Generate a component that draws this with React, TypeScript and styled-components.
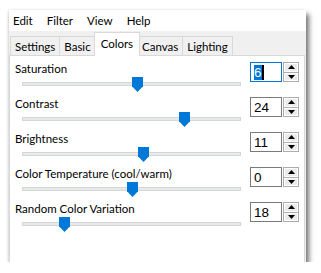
import styled, { createGlobalStyle } from 'styled-components';

const GlobalStyle = createGlobalStyle`
  html, body {
    margin: 0;
    background: #fff;
  }
  body {
    font-family: Lato, "Liberation Sans", sans-serif;
    color: #000;
  }
`;

const Page = styled.div`
  padding: 10px 0 0 9px;
`;

const Window = styled.div`
  width: 297px;
  height: 252px;
  display: flex;
  flex-direction: column;
  background: #f0f0f0;
  box-shadow: 3px 4px 5px rgba(0, 0, 0, 0.55), -1px 0 2px rgba(0, 0, 0, 0.12);
`;

const MenuBar = styled.div`
  height: 21px;
  display: flex;
  align-items: center;
  gap: 14px;
  padding-left: 4px;
  background: #fff;
  font-size: 11.5px;
`;

const MenuItem = styled.span``;

const TabStrip = styled.div`
  height: 24px;
  display: flex;
  align-items: flex-end;
  padding-left: 1px;
`;

const Tab = styled.div<{ $active?: boolean }>`
  height: ${p => (p.$active ? '21px' : '18px')};
  display: flex;
  align-items: center;
  justify-content: center;
  padding: 0 ${p => (p.$active ? '6px' : '4px')} ${p => (p.$active ? '2px' : '0')};
  margin-right: ${p => (p.$active ? '-2px' : '0')};
  margin-bottom: ${p => (p.$active ? '-1px' : '0')};
  margin-left: ${p => (p.$active ? '-2px' : '-1px')};
  border: 1px solid #d9d9d9;
  border-bottom: none;
  background: ${p => (p.$active ? '#fff' : '#f0f0f0')};
  font-size: 11.5px;
  position: relative;
  z-index: ${p => (p.$active ? 1 : 0)};
  &:first-child {
    margin-left: 0;
  }
`;

const Panel = styled.div`
  flex: 1;
  background: #fff;
  border: 1px solid #d9d9d9;
  border-bottom: none;
  margin-right: 1px;
  padding: 5px 0 0 0;
`;

const Row = styled.div`
  height: 35px;
  display: flex;
`;

const Left = styled.div`
  width: 240px;
  display: flex;
  flex-direction: column;
`;

const Label = styled.div`
  font-size: 11.5px;
  line-height: 16px;
  margin-left: 5px;
  white-space: nowrap;
`;

const Slider = styled.div`
  position: relative;
  width: 219px;
  height: 14px;
  margin-left: 12px;
  display: flex;
  align-items: center;
`;

const Track = styled.div`
  width: 100%;
  height: 2px;
  background: #e7eaea;
  border: 1px solid #d6d6d6;
`;

const Thumb = styled.div`
  position: absolute;
  top: 0;
  width: 11px;
  height: 15px;
  background: #0078d7;
  clip-path: polygon(0 0, 100% 0, 100% 62%, 50% 100%, 0 62%);
`;

const Spin = styled.div`
  margin-top: 1px;
  display: flex;
  height: 20px;
`;

const Field = styled.div<{ $focused?: boolean }>`
  width: 32px;
  height: 20px;
  box-sizing: border-box;
  border: 1px solid ${p => (p.$focused ? '#0078d7' : '#7a7a7a')};
  display: flex;
  align-items: center;
  padding-left: 3px;
  font-family: "Liberation Sans", sans-serif;
  font-size: 13.5px;
`;

const Selected = styled.span`
  background: #0078d7;
  color: #fff;
  line-height: 15px;
  border-right: 2px solid #000;
`;

const Buttons = styled.div`
  width: 16px;
  margin-left: 1px;
  display: flex;
  flex-direction: column;
`;

const SpinButton = styled.div`
  flex: 1;
  box-sizing: border-box;
  border: 1px solid #adadad;
  background: #ececec;
  box-shadow: inset 0 0 0 1px #fff;
  display: flex;
  align-items: center;
  justify-content: center;
  & + & {
    border-top: none;
  }
`;

const Arrow = ({ up }: { up?: boolean }) => (
  <svg width="7" height="4" viewBox="0 0 7 4">
    <path d={up ? 'M0 4 L3.5 0 L7 4 Z' : 'M0 0 L7 0 L3.5 4 Z'} fill="#000" />
  </svg>
);

const rows = [
  { label: 'Saturation', value: '6', thumb: 115, focused: true },
  { label: 'Contrast', value: '24', thumb: 162 },
  { label: 'Brightness', value: '11', thumb: 121 },
  { label: 'Color Temperature (cool/warm)', value: '0', thumb: 110 },
  { label: 'Random Color Variation', value: '18', thumb: 42 },
];

const App = () => {
  return (
    <Page>
      <GlobalStyle />
      <Window>
        <MenuBar>
          <MenuItem>Edit</MenuItem>
          <MenuItem>Filter</MenuItem>
          <MenuItem>View</MenuItem>
          <MenuItem>Help</MenuItem>
        </MenuBar>
        <TabStrip>
          <Tab>Settings</Tab>
          <Tab>Basic</Tab>
          <Tab $active>Colors</Tab>
          <Tab>Canvas</Tab>
          <Tab>Lighting</Tab>
        </TabStrip>
        <Panel>
          {rows.map(r => (
            <Row key={r.label}>
              <Left>
                <Label>{r.label}</Label>
                <Slider>
                  <Track />
                  <Thumb style={{ left: r.thumb - 5 }} />
                </Slider>
              </Left>
              <Spin>
                <Field $focused={r.focused}>
                  {r.focused ? <Selected>{r.value}</Selected> : r.value}
                </Field>
                <Buttons>
                  <SpinButton><Arrow up /></SpinButton>
                  <SpinButton><Arrow /></SpinButton>
                </Buttons>
              </Spin>
            </Row>
          ))}
        </Panel>
      </Window>
    </Page>
  );
};

export default App;
